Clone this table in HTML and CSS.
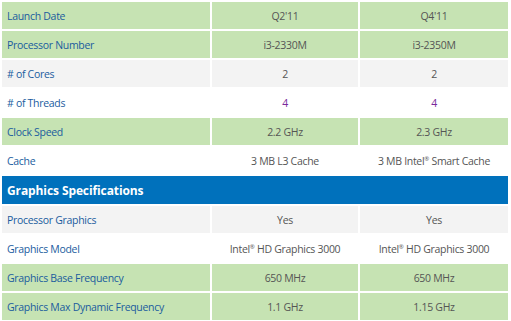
FILE: index.html
```html
<!DOCTYPE html>
<html>
<head>
<meta charset="utf-8">
<link rel="stylesheet" href="styles.css">
</head>
<body>
<table class="spec">
  <tbody>
    <tr class="green"><td class="label">Launch Date</td><td class="val">Q2'11</td><td class="val">Q4'11</td></tr>
    <tr class="green"><td class="label">Processor Number</td><td class="val">i3-2330M</td><td class="val">i3-2350M</td></tr>
    <tr class="gray"><td class="label"># of Cores</td><td class="val">2</td><td class="val">2</td></tr>
    <tr class="white"><td class="label"># of Threads</td><td class="val purple">4</td><td class="val purple">4</td></tr>
    <tr class="green"><td class="label">Clock Speed</td><td class="val">2.2 GHz</td><td class="val">2.3 GHz</td></tr>
    <tr class="white"><td class="label">Cache</td><td class="val">3 MB L3 Cache</td><td class="val">3 MB Intel<sup>®</sup> Smart Cache</td></tr>
    <tr class="head"><td colspan="3">Graphics Specifications</td></tr>
    <tr class="gray"><td class="label">Processor Graphics</td><td class="val">Yes</td><td class="val">Yes</td></tr>
    <tr class="white"><td class="label">Graphics Model</td><td class="val">Intel<sup>®</sup> HD Graphics 3000</td><td class="val">Intel<sup>®</sup> HD Graphics 3000</td></tr>
    <tr class="green"><td class="label">Graphics Base Frequency</td><td class="val">650 MHz</td><td class="val">650 MHz</td></tr>
    <tr class="green"><td class="label">Graphics Max Dynamic Frequency</td><td class="val">1.1 GHz</td><td class="val">1.15 GHz</td></tr>
  </tbody>
</table>
</body>
</html>
```
FILE: styles.css
```css
html, body {
  margin: 0;
  padding: 0;
  background: #ffffff;
}
body {
  font-family: "Open Sans", "Liberation Sans", sans-serif;
  font-size: 10.5px;
  letter-spacing: -0.3px;
}
.spec {
  border-collapse: separate;
  border-spacing: 2px;
  table-layout: fixed;
  width: 510px;
}
.spec td {
  height: 27px;
  padding: 0;
  vertical-align: middle;
  white-space: nowrap;
}
.spec td.label {
  width: 203px;
  padding-left: 5px;
  color: #1a5c9e;
}
.spec td.val {
  text-align: center;
  color: #555555;
}
.spec tr td.val:nth-child(2) { width: 146px; }
.spec tr td.val:nth-child(3) { width: 148px; }
.spec td.purple { color: #7a2a9c; }
.green td { background: #c6e3b3; }
.gray td { background: #f3f3f3; }
.white td { background: #ffffff; }
.head td {
  height: 28px;
  background: #0071bc;
  color: #ffffff;
  font-weight: bold;
  font-size: 12px;
  letter-spacing: -0.1px;
  padding-left: 5px;
}
sup {
  font-size: 6px;
  vertical-align: 4px;
  line-height: 0;
}
```
